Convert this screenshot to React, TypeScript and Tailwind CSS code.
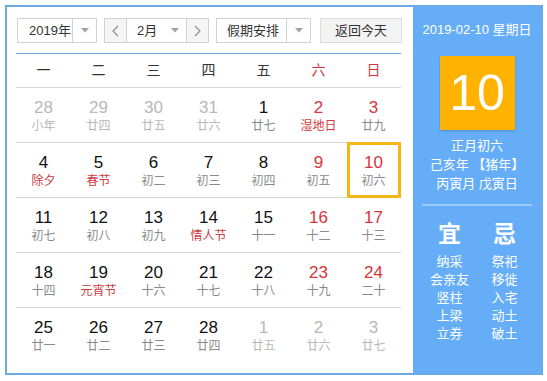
type Day = { n: number; l: string; other?: boolean; fest?: boolean; sel?: boolean };

const weeks: Day[][] = [
  [
    { n: 28, l: "小年", other: true },
    { n: 29, l: "廿四", other: true },
    { n: 30, l: "廿五", other: true },
    { n: 31, l: "廿六", other: true },
    { n: 1, l: "廿七" },
    { n: 2, l: "湿地日", fest: true },
    { n: 3, l: "廿九" },
  ],
  [
    { n: 4, l: "除夕", fest: true },
    { n: 5, l: "春节", fest: true },
    { n: 6, l: "初二" },
    { n: 7, l: "初三" },
    { n: 8, l: "初四" },
    { n: 9, l: "初五" },
    { n: 10, l: "初六", sel: true },
  ],
  [
    { n: 11, l: "初七" },
    { n: 12, l: "初八" },
    { n: 13, l: "初九" },
    { n: 14, l: "情人节", fest: true },
    { n: 15, l: "十一" },
    { n: 16, l: "十二" },
    { n: 17, l: "十三" },
  ],
  [
    { n: 18, l: "十四" },
    { n: 19, l: "元宵节", fest: true },
    { n: 20, l: "十六" },
    { n: 21, l: "十七" },
    { n: 22, l: "十八" },
    { n: 23, l: "十九" },
    { n: 24, l: "二十" },
  ],
  [
    { n: 25, l: "廿一" },
    { n: 26, l: "廿二" },
    { n: 27, l: "廿三" },
    { n: 28, l: "廿四" },
    { n: 1, l: "廿五", other: true },
    { n: 2, l: "廿六", other: true },
    { n: 3, l: "廿七", other: true },
  ],
];

const yi = ["纳采", "会亲友", "竖柱", "上梁", "立券"];
const ji = ["祭祀", "移徙", "入宅", "动土", "破土"];

function Caret() {
  return (
    <svg width="8" height="5" viewBox="0 0 8 5">
      <path d="M0 0 L8 0 L4 4.5 Z" fill="#a3a3a3" />
    </svg>
  );
}

function Chevron({ dir }: { dir: "l" | "r" }) {
  return (
    <svg width="7" height="12" viewBox="0 0 7 12">
      <path
        d={dir === "l" ? "M6 1 L1 6 L6 11" : "M1 1 L6 6 L1 11"}
        fill="none"
        stroke="#8a8a8a"
        strokeWidth="1.1"
      />
    </svg>
  );
}

export default function App() {
  return (
    <div
      className="w-[547px] h-[381px] bg-white pt-[5px] pl-[5px] text-[#333]"
      style={{ fontFamily: '"Liberation Sans", "Noto Sans CJK SC", sans-serif' }}
    >
      <div className="w-[538px] h-[370px] border-2 border-[#6aa8e8] flex">
        {/* left: calendar */}
        <div className="w-[406px] pl-[9px] pt-[11px]">
          {/* controls */}
          <div className="flex items-center h-[25px] pl-[1px] text-[13px] whitespace-nowrap">
            <div className="flex h-[25px] w-[80px] border border-[#d2d2d2] bg-white">
              <div className="w-[55px] flex items-center pl-[11px] border-r border-[#d2d2d2]">2019年</div>
              <div className="flex-1 flex items-center justify-center">
                <Caret />
              </div>
            </div>

            <div className="flex h-[25px] w-[105px] ml-[7px] border border-[#d2d2d2]">
              <div className="w-[22px] flex items-center justify-center bg-[#f5f5f5] border-r border-[#d2d2d2]">
                <Chevron dir="l" />
              </div>
              <div className="flex-1 flex items-center pl-[10px] bg-white">
                <span>2月</span>
                <span className="ml-[14px] flex items-center">
                  <Caret />
                </span>
              </div>
              <div className="w-[22px] flex items-center justify-center bg-[#f5f5f5] border-l border-[#d2d2d2]">
                <Chevron dir="r" />
              </div>
            </div>

            <div className="flex h-[25px] w-[95px] ml-[7px] border border-[#d2d2d2] bg-white">
              <div className="w-[70px] flex items-center pl-[10px] border-r border-[#d2d2d2]">假期安排</div>
              <div className="flex-1 flex items-center justify-center">
                <Caret />
              </div>
            </div>

            <div className="flex h-[25px] w-[82px] ml-[9px] border border-[#dcdcdc] bg-[#f3f3f3] items-center justify-center">
              返回今天
            </div>
          </div>

          {/* weekday header */}
          <div className="w-[385px] mt-[10px] border-t border-[#6aa8e8] border-b border-b-[#d6d6d6] grid grid-cols-7 h-[35px] items-center text-[14px]">
            {["一", "二", "三", "四", "五", "六", "日"].map((w, i) => (
              <div key={w} className={`text-center ${i >= 5 ? "text-[#d8343c]" : "text-[#333]"}`}>
                {w}
              </div>
            ))}
          </div>

          {/* weeks */}
          {weeks.map((row, ri) => (
            <div
              key={ri}
              className={`w-[385px] grid grid-cols-7 h-[55px] ${ri < 4 ? "border-b border-[#d6d6d6]" : ""}`}
            >
              {row.map((d, ci) => {
                const weekend = ci >= 5;
                const numColor = d.other ? "text-[#b8b8b8]" : weekend ? "text-[#d8343c]" : "text-[#111]";
                const lunColor = d.other ? "text-[#b8b8b8]" : d.fest ? "text-[#d03a3f]" : "text-[#8a8a8a]";
                return (
                  <div key={ci} className="relative flex flex-col items-center pt-[10px]">
                    {d.sel && (
                      <div className="absolute left-[1px] right-0 -top-[1px] -bottom-[1px] border-[3px] border-[#f5b715]" />
                    )}
                    <div className={`text-[17px] leading-[20px] ${numColor}`}>{d.n}</div>
                    <div className={`text-[12px] leading-[16px] ${lunColor}`}>{d.l}</div>
                  </div>
                );
              })}
            </div>
          ))}
        </div>

        {/* right: day detail */}
        <div className="flex-1 bg-[#65adf7] flex flex-col items-center text-white">
          <div className="mt-[14px] text-[13px] leading-[18px]">2019-02-10 星期日</div>
          <div className="mt-[17px] w-[75px] h-[74px] bg-[#ffb300] shadow-[0_1px_2px_rgba(0,0,0,0.2)] flex items-center justify-center text-[50px] leading-none">
            10
          </div>
          <div className="mt-[6px] text-[13px] leading-[19px] text-center">
            <div>正月初六</div>
            <div>己亥年 【猪年】</div>
            <div>丙寅月 戊寅日</div>
          </div>
          <div className="mt-[11px] w-[110px] h-[2px] bg-[#9ccbf8]" />
          <div className="mt-[14px] flex">
            <div className="w-[55px] flex flex-col items-center">
              <div className="text-[23px] leading-[28px] font-bold">宜</div>
              <div className="mt-[5px] text-[13px] leading-[18px] text-center">
                {yi.map((t) => (
                  <div key={t}>{t}</div>
                ))}
              </div>
            </div>
            <div className="w-[55px] flex flex-col items-center">
              <div className="text-[23px] leading-[28px] font-bold">忌</div>
              <div className="mt-[5px] text-[13px] leading-[18px] text-center">
                {ji.map((t) => (
                  <div key={t}>{t}</div>
                ))}
              </div>
            </div>
          </div>
        </div>
      </div>
    </div>
  );
}
